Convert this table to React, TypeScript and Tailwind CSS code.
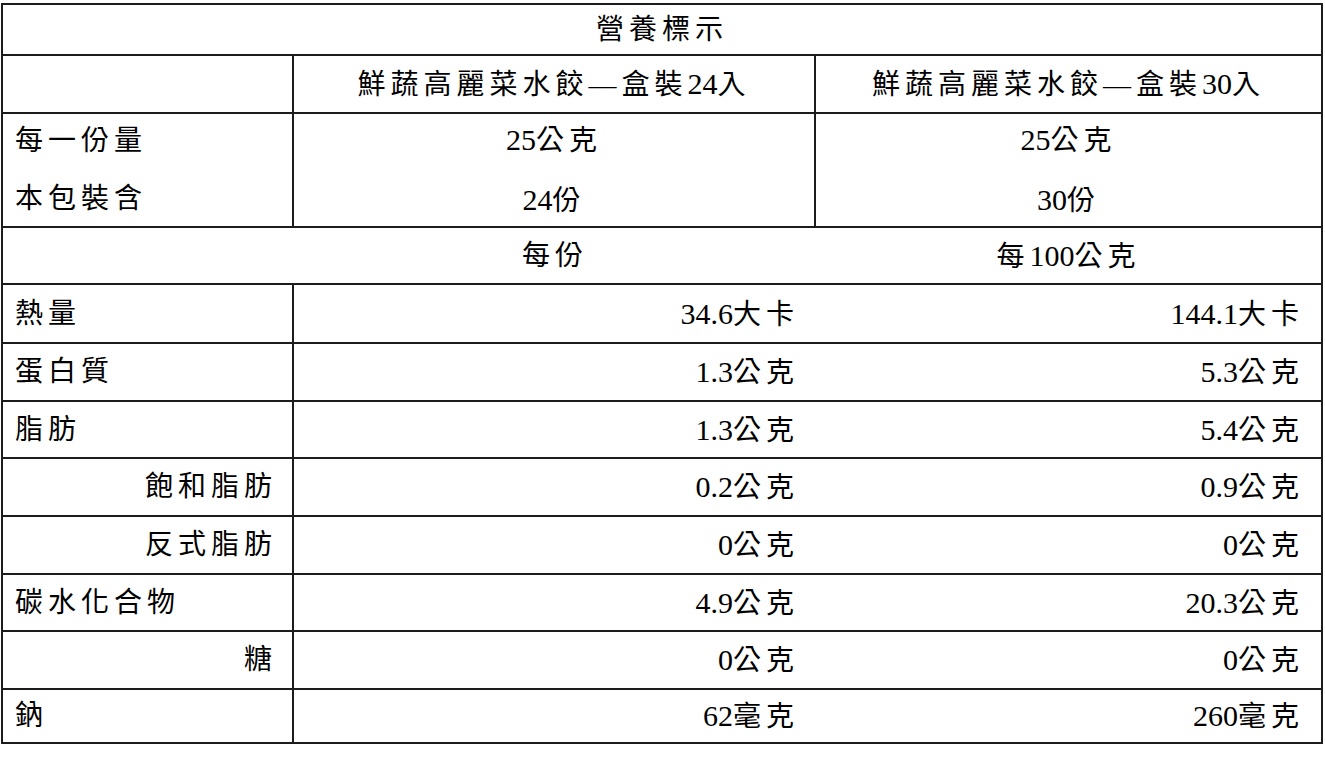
import React from "react";

// digits and dots keep normal spacing, CJK runs get the wide tracking of the print label
const Txt: React.FC<{ text: string }> = ({ text }) => (
  <span className="whitespace-nowrap">
    {text.split(/([0-9.]+)/).map((part, i) =>
      /^[0-9.]+$/.test(part) ? (
        <span key={i} className="text-[30px] tracking-normal">
          {part}
        </span>
      ) : (
        <span key={i}>{part}</span>
      )
    )}
  </span>
);

interface NutrientRow {
  label: string;
  indent?: boolean;
  perServing: string;
  per100: string;
  height: string;
}

const nutrients: NutrientRow[] = [
  { label: "熱量", perServing: "34.6大卡", per100: "144.1大卡", height: "h-[59px]" },
  { label: "蛋白質", perServing: "1.3公克", per100: "5.3公克", height: "h-[58px]" },
  { label: "脂肪", perServing: "1.3公克", per100: "5.4公克", height: "h-[57px]" },
  { label: "飽和脂肪", indent: true, perServing: "0.2公克", per100: "0.9公克", height: "h-[58px]" },
  { label: "反式脂肪", indent: true, perServing: "0公克", per100: "0公克", height: "h-[58px]" },
  { label: "碳水化合物", perServing: "4.9公克", per100: "20.3公克", height: "h-[57px]" },
  { label: "糖", indent: true, perServing: "0公克", per100: "0公克", height: "h-[58px]" },
  { label: "鈉", perServing: "62毫克", per100: "260毫克", height: "h-[52px]" },
];

export default function App() {
  return (
    <div className="min-h-screen bg-white pt-[3px] pl-px">
      <div
        className="w-[1322px] border-2 border-[#1c1c1c] text-[28px] leading-none tracking-[5px] text-black"
        style={{ fontFamily: '"Liberation Serif", "Noto Sans CJK TC", serif' }}
      >
        <div className="flex h-[51px] items-center justify-center border-b-2 border-[#1c1c1c]">
          <Txt text="營養標示" />
        </div>

        <div className="flex h-[58px] border-b-2 border-[#1c1c1c]">
          <div className="w-[291px] border-r-2 border-[#1c1c1c]" />
          <div className="flex w-[522px] items-center justify-center border-r-2 border-[#1c1c1c]">
            <Txt text="鮮蔬高麗菜水餃—盒裝24入" />
          </div>
          <div className="flex flex-1 items-center justify-center">
            <Txt text="鮮蔬高麗菜水餃—盒裝30入" />
          </div>
        </div>

        <div className="flex h-[114px] border-b-2 border-[#1c1c1c]">
          <div className="flex w-[291px] flex-col justify-center gap-[30px] border-r-2 border-[#1c1c1c] pl-[12px]">
            <Txt text="每一份量" />
            <Txt text="本包裝含" />
          </div>
          <div className="flex w-[522px] flex-col items-center justify-center gap-[30px] border-r-2 border-[#1c1c1c]">
            <Txt text="25公克" />
            <Txt text="24份" />
          </div>
          <div className="flex flex-1 flex-col items-center justify-center gap-[30px]">
            <Txt text="25公克" />
            <Txt text="30份" />
          </div>
        </div>

        <div className="flex h-[57px] border-b-2 border-[#1c1c1c]">
          <div className="w-[291px]" />
          <div className="flex w-[522px] items-center justify-center">
            <Txt text="每份" />
          </div>
          <div className="flex flex-1 items-center justify-center">
            <Txt text="每100公克" />
          </div>
        </div>

        {nutrients.map((row, idx) => (
          <div
            key={row.label}
            className={`flex ${row.height} ${idx < nutrients.length - 1 ? "border-b-2 border-[#1c1c1c]" : ""}`}
          >
            <div
              className={`flex w-[291px] items-center border-r-2 border-[#1c1c1c] ${
                row.indent ? "justify-end pr-[15px]" : "pl-[12px]"
              }`}
            >
              <Txt text={row.label} />
            </div>
            <div className="flex w-[522px] items-center justify-end pr-[17px]">
              <Txt text={row.perServing} />
            </div>
            <div className="flex flex-1 items-center justify-end pr-[17px]">
              <Txt text={row.per100} />
            </div>
          </div>
        ))}
      </div>
    </div>
  );
}
